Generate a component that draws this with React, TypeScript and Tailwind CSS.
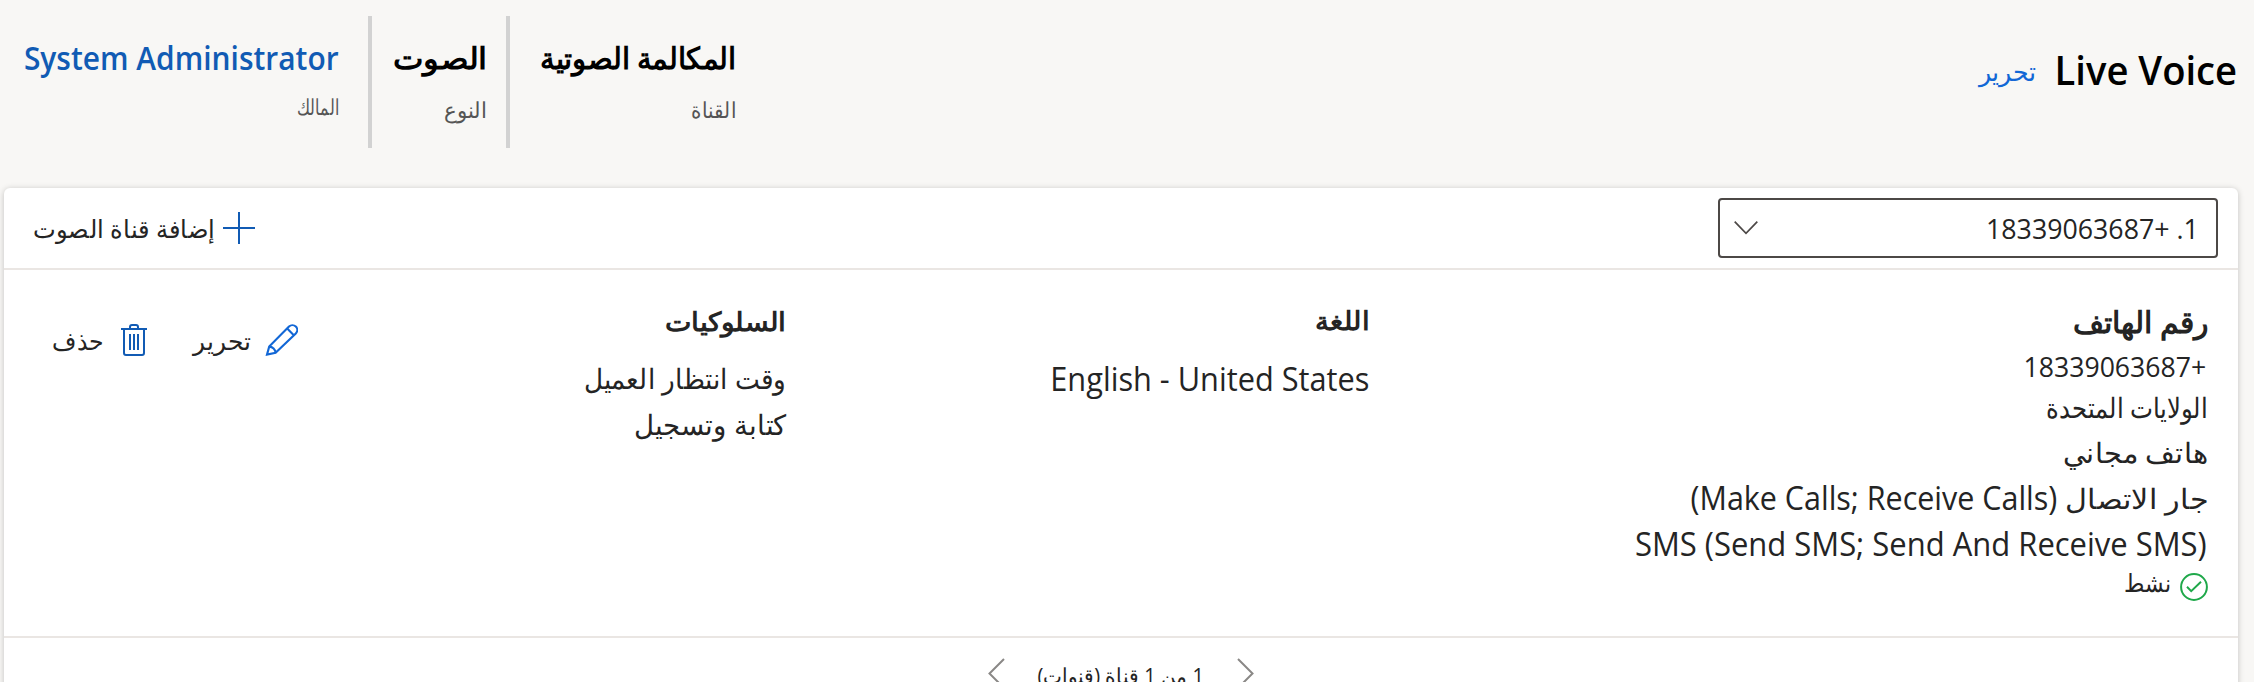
import type { ReactNode } from 'react';

function T({ className, children, dir }: { className: string; children: ReactNode; dir?: 'ltr' | 'rtl' }) {
  return (
    <span dir={dir} className={`block w-max origin-right whitespace-nowrap ${className}`}>
      {children}
    </span>
  );
}

function Stat({ className, value, label }: { className: string; value: ReactNode; label: ReactNode }) {
  return (
    <div className={`flex h-[132px] flex-col items-start border-[#d2d2d2] pt-[22px] ${className}`}>
      {value}
      {label}
    </div>
  );
}

const PlusIcon = () => (
  <svg width="32" height="32" viewBox="0 0 32 32" fill="none" stroke="#115bb4" strokeWidth="2">
    <path d="M16 0V32M0 16H32" />
  </svg>
);

const TrashIcon = () => (
  <svg width="26" height="32" viewBox="0 0 26 32" fill="none" stroke="#115bb4" strokeWidth="2">
    <path d="M0 5H26M9 5V3a2 2 0 0 1 2-2h4a2 2 0 0 1 2 2V5M3 5V29a2 2 0 0 0 2 2H21a2 2 0 0 0 2-2V5M9 10V26M13 10V26M17 10V26" />
  </svg>
);

const PencilIcon = () => (
  <svg width="33" height="32" viewBox="0 0 33 32" fill="none" stroke="#1267d6" strokeWidth="2.1" strokeLinejoin="miter">
    <path d="M2 30.6L4.2 22.6L24 2.6a4.7 4.7 0 0 1 6.8 6.8L10.6 28.8L2 30.6ZM22.2 4.6L28.8 11.2M4.2 22.6A6.6 6.6 0 0 1 10.6 28.8" />
  </svg>
);

const CheckCircleIcon = () => (
  <svg width="28" height="28" viewBox="0 0 28 28" fill="none" stroke="#1fa84a" strokeWidth="2">
    <circle cx="14" cy="14" r="12.9" />
    <path d="M7 13.8L11.2 18.2L21 8.8" />
  </svg>
);

export default function App() {
  return (
    <div
      dir="rtl"
      className="h-[682px] w-[2254px] overflow-hidden bg-[#f8f7f5] font-['Open_Sans','Noto_Sans',sans-serif] text-[#242424]"
    >
      <header className="flex h-[188px] items-start justify-between pr-[17px]">
        <div className="flex items-start pt-[42px]">
          <div className="w-[185px]">
            <T className="scale-x-[0.955] text-[40px] leading-[56px] font-semibold text-black">Live Voice</T>
          </div>
          <a className="mt-[9px] mr-[16px] block">
            <T className="scale-x-[0.97] text-[26px] leading-[40px] text-[#1267d6]">تحرير</T>
          </a>
        </div>
        <div className="flex pt-[16px]">
          <Stat
            className="w-[229px] border-l-4"
            value={<T className="-mr-px scale-x-[0.97] text-[30px] leading-[40px] font-bold text-black">المكالمة الصوتية</T>}
            label={<T className="-mr-px mt-[16px] scale-x-[0.9] text-[22px] leading-[30px] text-[#555]">القناة</T>}
          />
          <Stat
            className="w-[138px] border-l-4 pr-[19px]"
            value={<T className="scale-x-[1.08] text-[30px] leading-[40px] font-bold text-black">الصوت</T>}
            label={<T className="mt-[16px] scale-x-[0.97] text-[22px] leading-[30px] text-[#555]">النوع</T>}
          />
          <Stat
            className="w-[368px] pr-[29px]"
            value={
              <T className="scale-x-[0.935] text-[32px] leading-[40px] font-semibold text-[#115bb4]">System Administrator</T>
            }
            label={<T className="mt-[13px] scale-x-[0.72] text-[22px] leading-[30px] text-[#555]">المالك</T>}
          />
        </div>
      </header>

      <main className="mr-[16px] ml-[4px] h-[520px] rounded-[6px] bg-white shadow-[0_1px_6px_rgba(0,0,0,0.22)]">
        <div className="flex h-[82px] items-center justify-between border-b-2 border-[#eae6e3] pr-[20px] pl-[30px]">
          <div className="flex h-[60px] w-[500px] items-center justify-between rounded-[4px] border-2 border-[#4c4846] pr-[17px] pl-[14px]">
            <T className="mb-px scale-x-[0.955] text-[28px] leading-[38px]">1. +18339063687</T>
            <svg width="24" height="14" viewBox="0 0 24 14" fill="none" stroke="#4c4846" strokeWidth="1.7">
              <path d="M0.7 0.7L12 12.3L23.3 0.7" />
            </svg>
          </div>
          <button className="flex items-center gap-[8px]">
            <PlusIcon />
            <span className="w-[181px]">
              <T className="scale-x-[0.965] text-[25px] leading-[40px]">إضافة قناة الصوت</T>
            </span>
          </button>
        </div>

        <section className="flex h-[368px] items-start border-b-2 border-[#eae6e3] pt-[32px] pr-[30px]">
          <div className="w-[839px]">
            <T className="scale-x-100 text-[30px] leading-[40px] font-bold">رقم الهاتف</T>
            <T className="mt-[5px] mr-[2px] scale-x-[0.95] text-[28px] leading-[38px]">+18339063687</T>
            <T className="scale-x-[0.87] text-[28px] leading-[45px]">الولايات المتحدة</T>
            <T className="scale-x-[1.03] text-[28px] leading-[45px]">هاتف مجاني</T>
            <div className="flex h-[46px]">
              <span className="w-[142px]">
                <T className="scale-x-[1.08] text-[28px] leading-[46px]">جار الاتصال</T>
              </span>
              <T dir="ltr" className="mr-[9px] scale-x-[0.952] text-[32px] leading-[46px]">(Make Calls; Receive Calls)</T>
            </div>
            <T dir="ltr" className="mr-px scale-x-[0.968] text-[32px] leading-[46px]">SMS (Send SMS; Send And Receive SMS)</T>
            <div className="mt-[6px] flex items-start gap-[9px]">
              <CheckCircleIcon />
              <T className="mt-px scale-x-[0.88] text-[25px] leading-[16px]">نشط</T>
            </div>
          </div>
          <div className="w-[583px]">
            <T className="scale-x-[1.06] text-[26px] leading-[36px] font-bold">اللغة</T>
            <T className="mt-[18px] scale-x-[0.96] text-[32px] leading-[46px]">English - United States</T>
          </div>
          <div className="w-[488px]">
            <T className="scale-x-[1.08] text-[26px] leading-[38px] font-bold">السلوكيات</T>
            <T className="mt-[15px] -mr-px scale-x-[0.94] text-[28px] leading-[46px]">وقت انتظار العميل</T>
            <T className="scale-x-[0.985] text-[28px] leading-[46px]">كتابة وتسجيل</T>
          </div>
          <div className="mt-[18px] flex h-[40px] items-center">
            <PencilIcon />
            <span className="mr-[14px] w-[58px]">
              <T className="text-[25px] leading-[40px]">تحرير</T>
            </span>
            <span className="mr-[46px]">
              <TrashIcon />
            </span>
            <span className="mr-[18px] w-[51px]">
              <T className="scale-x-[0.94] text-[25px] leading-[40px]">حذف</T>
            </span>
          </div>
        </section>

        <nav className="flex items-start justify-center pt-[20px]">
          <svg width="17" height="28" viewBox="0 0 17 28" fill="none" stroke="#8a8886" strokeWidth="2">
            <path d="M1 1L15.5 15.5L3 28" />
          </svg>
          <span className="mr-[33px] ml-[36px] -mt-px w-[163px]">
            <T className="scale-x-[0.91] text-[22px] leading-[36px]">1 من 1 قناة (قنوات)</T>
          </span>
          <svg width="17" height="28" viewBox="0 0 17 28" fill="none" stroke="#8a8886" strokeWidth="2">
            <path d="M16 1L1.5 15.5L14 28" />
          </svg>
        </nav>
      </main>
    </div>
  );
}
